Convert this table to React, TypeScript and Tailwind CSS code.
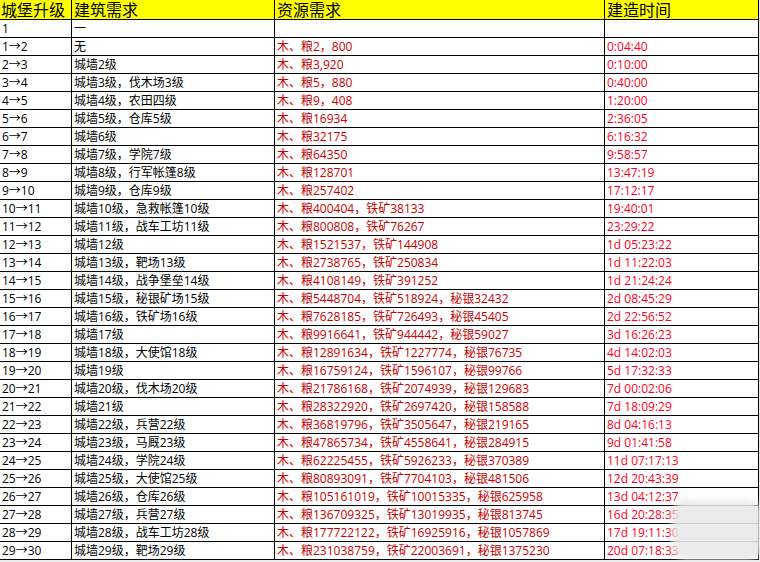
import React from "react";

type Row = [string, string, string, string];

const rows: Row[] = [
  ["1", "一", "", ""],
  ["1→2", "无", "木、粮2，800", "0:04:40"],
  ["2→3", "城墙2级", "木、粮3,920", "0:10:00"],
  ["3→4", "城墙3级，伐木场3级", "木、粮5，880", "0:40:00"],
  ["4→5", "城墙4级，农田四级", "木、粮9，408", "1:20:00"],
  ["5→6", "城墙5级，仓库5级", "木、粮16934", "2:36:05"],
  ["6→7", "城墙6级", "木、粮32175", "6:16:32"],
  ["7→8", "城墙7级，学院7级", "木、粮64350", "9:58:57"],
  ["8→9", "城墙8级，行军帐篷8级", "木、粮128701", "13:47:19"],
  ["9→10", "城墙9级，仓库9级", "木、粮257402", "17:12:17"],
  ["10→11", "城墙10级，急救帐篷10级", "木、粮400404，铁矿38133", "19:40:01"],
  ["11→12", "城墙11级，战车工坊11级", "木、粮800808，铁矿76267", "23:29:22"],
  ["12→13", "城墙12级", "木、粮1521537，铁矿144908", "1d 05:23:22"],
  ["13→14", "城墙13级，靶场13级", "木、粮2738765，铁矿250834", "1d 11:22:03"],
  ["14→15", "城墙14级，战争堡垒14级", "木、粮4108149，铁矿391252", "1d 21:24:24"],
  ["15→16", "城墙15级，秘银矿场15级", "木、粮5448704，铁矿518924，秘银32432", "2d 08:45:29"],
  ["16→17", "城墙16级，铁矿场16级", "木、粮7628185，铁矿726493，秘银45405", "2d 22:56:52"],
  ["17→18", "城墙17级", "木、粮9916641，铁矿944442，秘银59027", "3d 16:26:23"],
  ["18→19", "城墙18级，大使馆18级", "木、粮12891634，铁矿1227774，秘银76735", "4d 14:02:03"],
  ["19→20", "城墙19级", "木、粮16759124，铁矿1596107，秘银99766", "5d 17:32:33"],
  ["20→21", "城墙20级，伐木场20级", "木、粮21786168，铁矿2074939，秘银129683", "7d 00:02:06"],
  ["21→22", "城墙21级", "木、粮28322920，铁矿2697420，秘银158588", "7d 18:09:29"],
  ["22→23", "城墙22级，兵营22级", "木、粮36819796，铁矿3505647，秘银219165", "8d 04:16:13"],
  ["23→24", "城墙23级，马厩23级", "木、粮47865734，铁矿4558641，秘银284915", "9d 01:41:58"],
  ["24→25", "城墙24级，学院24级", "木、粮62225455，铁矿5926233，秘银370389", "11d 07:17:13"],
  ["25→26", "城墙25级，大使馆25级", "木、粮80893091，铁矿7704103，秘银481506", "12d 20:43:39"],
  ["26→27", "城墙26级，仓库26级", "木、粮105161019，铁矿10015335，秘银625958", "13d 04:12:37"],
  ["27→28", "城墙27级，兵营27级", "木、粮136709325，铁矿13019935，秘银813745", "16d 20:28:35"],
  ["28→29", "城墙28级，战车工坊28级", "木、粮177722122，铁矿16925916，秘银1057869", "17d 19:11:30"],
  ["29→30", "城墙29级，靶场29级", "木、粮231038759，铁矿22003691，秘银1375230", "20d 07:18:33"],
];

const font = {
  fontFamily: '"Open Sans", "Noto Sans CJK SC", sans-serif',
};

export default function App() {
  return (
    <div className="relative w-[760px] h-[562px] bg-[#ececec] overflow-hidden" style={font}>
      <div className="grid grid-cols-[72px_203px_330px_154px] w-[759px] bg-white">
        <div className="h-[20px] bg-[#ffff00] border-r border-b border-black pl-[1px] flex items-center text-[16px] leading-[18px] text-black whitespace-nowrap">城堡升级</div>
        <div className="h-[20px] bg-[#ffff00] border-r border-b border-black pl-[2px] flex items-center text-[16px] leading-[18px] text-black whitespace-nowrap">建筑需求</div>
        <div className="h-[20px] bg-[#ffff00] border-r border-b border-black pl-[2px] flex items-center text-[16px] leading-[18px] text-black whitespace-nowrap">资源需求</div>
        <div className="h-[20px] bg-[#ffff00] border-r border-b border-black pl-[2px] flex items-center text-[16px] leading-[18px] text-black whitespace-nowrap">建造时间</div>
        {rows.map((r, i) => (
          <React.Fragment key={i}>
            <div className="h-[18px] border-r border-b border-black pl-[2px] flex items-center text-[12px] leading-[17px] text-black whitespace-nowrap">{r[0]}</div>
            <div className="h-[18px] border-r border-b border-black pl-[2px] flex items-center text-[12px] leading-[17px] text-black whitespace-nowrap">{r[1]}</div>
            <div className="h-[18px] border-r border-b border-black pl-[2px] flex items-center text-[12px] leading-[17px] text-[#c80000] whitespace-nowrap">{r[2]}</div>
            <div className="h-[18px] border-r border-b border-black pl-[2px] flex items-center text-[12px] leading-[17px] text-[#ff0022] whitespace-nowrap">{r[3]}</div>
          </React.Fragment>
        ))}
      </div>
      <div className="absolute left-[672px] top-[500px] w-[90px] h-[60px] bg-[#e8e8e8]/90 blur-[3px] rounded-[14px]" />
    </div>
  );
}
